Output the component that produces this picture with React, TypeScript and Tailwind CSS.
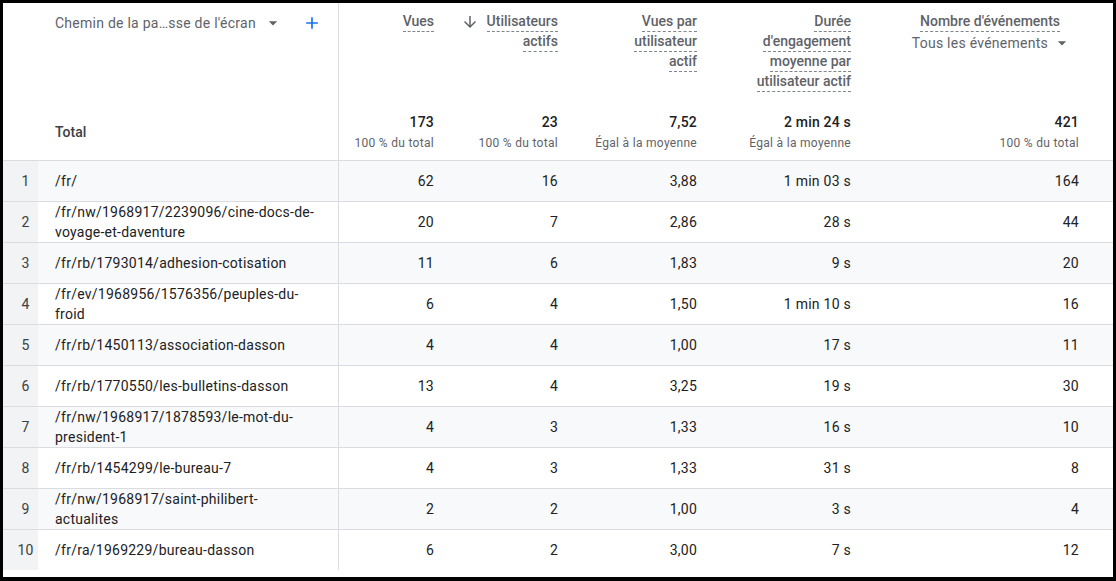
import React from 'react';

interface Row {
  path: string[];
  vues: string;
  users: string;
  perUser: string;
  duration: string;
  events: string;
}

const rows: Row[] = [
  { path: ['/fr/'], vues: '62', users: '16', perUser: '3,88', duration: '1 min 03 s', events: '164' },
  { path: ['/fr/nw/1968917/2239096/cine-docs-de-', 'voyage-et-daventure'], vues: '20', users: '7', perUser: '2,86', duration: '28 s', events: '44' },
  { path: ['/fr/rb/1793014/adhesion-cotisation'], vues: '11', users: '6', perUser: '1,83', duration: '9 s', events: '20' },
  { path: ['/fr/ev/1968956/1576356/peuples-du-', 'froid'], vues: '6', users: '4', perUser: '1,50', duration: '1 min 10 s', events: '16' },
  { path: ['/fr/rb/1450113/association-dasson'], vues: '4', users: '4', perUser: '1,00', duration: '17 s', events: '11' },
  { path: ['/fr/rb/1770550/les-bulletins-dasson'], vues: '13', users: '4', perUser: '3,25', duration: '19 s', events: '30' },
  { path: ['/fr/nw/1968917/1878593/le-mot-du-', 'president-1'], vues: '4', users: '3', perUser: '1,33', duration: '16 s', events: '10' },
  { path: ['/fr/rb/1454299/le-bureau-7'], vues: '4', users: '3', perUser: '1,33', duration: '31 s', events: '8' },
  { path: ['/fr/nw/1968917/saint-philibert-', 'actualites'], vues: '2', users: '2', perUser: '1,00', duration: '3 s', events: '4' },
  { path: ['/fr/ra/1969229/bureau-dasson'], vues: '6', users: '2', perUser: '3,00', duration: '7 s', events: '12' },
];

// column widths shared by header and rows
const W = {
  idx: 'w-[35px]',
  dim: 'w-[301px]',
  vues: 'w-[111px]',
  users: 'w-[124px]',
  perUser: 'w-[139px]',
  duration: 'w-[154px]',
  events: 'w-[228px]',
};

function Dashed({ lines }: { lines: string[] }) {
  return (
    <div className="flex flex-col items-end text-[14px] font-medium leading-[19px] text-[#5f6368]">
      {lines.map((l) => (
        <span key={l} className="border-b border-dashed border-[#80868b]">
          {l}
        </span>
      ))}
    </div>
  );
}

function Total({ value, sub }: { value: string; sub: string }) {
  return (
    <div className="mt-auto flex flex-col items-end pb-[8px]">
      <div className="text-[14px] font-medium leading-5 tracking-[0.2px] text-[#202124]">{value}</div>
      <div className="mt-[2px] text-[12px] leading-[18px] tracking-[0.3px] text-[#5f6368]">{sub}</div>
    </div>
  );
}

function Caret() {
  return (
    <svg width="20" height="20" viewBox="0 0 24 24" fill="#5f6368">
      <path d="M7 10l5 5 5-5z" />
    </svg>
  );
}

export default function App() {
  return (
    <div
      className="h-[581px] w-[1116px] overflow-hidden border-x-[3px] border-t-[3px] border-b-[4px] border-black bg-white"
      style={{ fontFamily: 'Roboto, "Liberation Sans", sans-serif' }}
    >
      {/* Header */}
      <div className="flex h-[158px] border-b border-[#dadce0]">
        <div className={W.idx} />
        <div className={`${W.dim} flex flex-col border-r border-[#dadce0] pl-[17px]`}>
          <div className="flex items-center pt-[10px] text-[14px] leading-5 tracking-[0.25px] text-[#5f6368]">
            <span>Chemin de la pa…sse de l'écran</span>
            <span className="ml-[7px]">
              <Caret />
            </span>
            <svg className="ml-[19px]" width="20" height="20" viewBox="0 0 24 24" fill="#1a73e8">
              <path d="M19 13h-6v6h-2v-6H5v-2h6V5h2v6h6v2z" />
            </svg>
          </div>
          <div className="mt-auto pb-[18px] text-[14px] font-medium leading-5 text-[#3c4043]">Total</div>
        </div>
        <div className={`${W.vues} flex flex-col items-end pr-4 pt-[9px]`}>
          <Dashed lines={['Vues']} />
          <Total value="173" sub="100 % du total" />
        </div>
        <div className={`${W.users} flex flex-col items-end pr-4 pt-[9px]`}>
          <div className="flex items-start">
            <svg className="mr-[8px] mt-[1px]" width="18" height="18" viewBox="0 0 24 24" fill="#5f6368">
              <path d="M20 12l-1.41-1.41L13 16.17V4h-2v12.17l-5.58-5.59L4 12l8 8 8-8z" />
            </svg>
            <Dashed lines={['Utilisateurs', 'actifs']} />
          </div>
          <Total value="23" sub="100 % du total" />
        </div>
        <div className={`${W.perUser} flex flex-col items-end pr-4 pt-[9px]`}>
          <Dashed lines={['Vues par', 'utilisateur', 'actif']} />
          <Total value="7,52" sub="Égal à la moyenne" />
        </div>
        <div className={`${W.duration} flex flex-col items-end pr-4 pt-[9px]`}>
          <Dashed lines={['Durée', "d'engagement", 'moyenne par', 'utilisateur actif']} />
          <Total value="2 min 24 s" sub="Égal à la moyenne" />
        </div>
        <div className={`${W.events} flex flex-col items-end pr-4 pt-[9px]`}>
          <div className="mr-[13px] flex flex-col items-end">
            <div className="mr-[6px]">
              <Dashed lines={["Nombre d'événements"]} />
            </div>
            <div className="mt-[1px] flex items-center text-[14px] leading-5 tracking-[0.25px] text-[#5f6368]">
              <span>Tous les événements</span>
              <span className="ml-[4px] -mr-[6px]">
                <Caret />
              </span>
            </div>
          </div>
          <Total value="421" sub="100 % du total" />
        </div>
        <div className="flex-1" />
      </div>

      {/* Rows */}
      {rows.map((r, i) => (
        <div
          key={i}
          className={`flex text-[14px] leading-5 tracking-[0.25px] text-[#202124] ${
            i < rows.length - 1 ? 'min-h-[41px] border-b border-[#dadce0]' : 'min-h-[40px]'
          } ${i % 2 === 0 ? 'bg-[#f8f9fa]' : 'bg-white'}`}
        >
          <div className={`${W.idx} flex items-center justify-center bg-[#f1f3f4] pl-[10px] text-[#3c4043]`}>
            {i + 1}
          </div>
          <div className={`${W.dim} flex flex-col justify-center border-r border-[#dadce0] pl-[17px]`}>
            {r.path.map((p) => (
              <span key={p}>{p}</span>
            ))}
          </div>
          <div className={`${W.vues} flex items-center justify-end pr-4`}>{r.vues}</div>
          <div className={`${W.users} flex items-center justify-end pr-4`}>{r.users}</div>
          <div className={`${W.perUser} flex items-center justify-end pr-4`}>{r.perUser}</div>
          <div className={`${W.duration} flex items-center justify-end pr-4`}>{r.duration}</div>
          <div className={`${W.events} flex items-center justify-end pr-4`}>{r.events}</div>
          <div className="flex-1" />
        </div>
      ))}
    </div>
  );
}
